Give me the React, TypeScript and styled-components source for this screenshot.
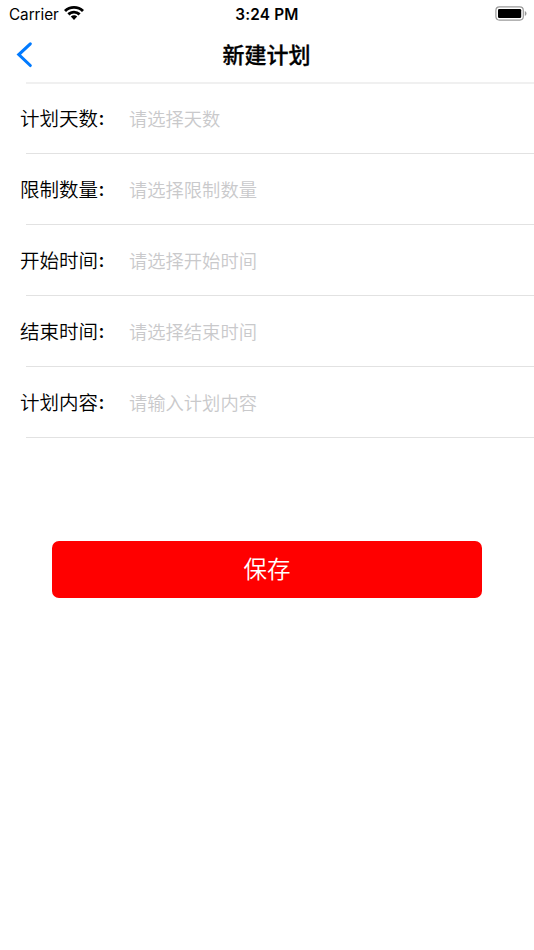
import React from "react";
import styled, { createGlobalStyle } from "styled-components";

const GlobalStyle = createGlobalStyle`
  * { box-sizing: border-box; }
  body { margin: 0; background: #fff; color: #000; font-family: Inter, "Noto Sans CJK SC", sans-serif; }
`;
const Screen = styled.main`width: 534px; height: 950px; background: #fff; overflow: hidden;`;
const StatusBar = styled.header`
  height: 28px; display: grid; grid-template-columns: 1fr auto 1fr; align-items: center; padding: 0 7px 0 9px;
`;
const Carrier = styled.div`
  display: flex; align-items: center; gap: 5px; font-size: 15.3px; letter-spacing: -0.05px; line-height: 20px; padding-top: 1px;
  svg { margin-top: -3px; }
`;
const Clock = styled.time`
  font-size: 15.3px; font-weight: 600; letter-spacing: 0.2px; line-height: 20px; margin-right: 2px; padding-top: 1px;
`;
const Battery = styled.div`justify-self: end; display: flex; margin-top: -2px;`;
const NavBar = styled.nav`
  height: 54px; display: grid; grid-template-columns: 48px 1fr 48px; align-items: center;
`;
const BackButton = styled.button`
  border: 0; background: none; padding: 0 0 0 16px; display: flex;
`;
const Title = styled.h1`
  margin: 0 1px 0 0; text-align: center; font-size: 22px; line-height: 32px; font-weight: 500;
  -webkit-text-stroke: 0.3px #000;
`;
const Form = styled.form`display: block;`;
const Rows = styled.div`margin-left: 26px; border-top: 2px solid #f0f0f0;`;
const Row = styled.label`
  height: 71px; display: flex; align-items: center; padding-top: 1px; border-bottom: 1px solid #e2e2e2;
  &:first-child { height: 70px; padding-top: 0; }
`;
const Label = styled.span`
  width: 110px; margin-left: -6px; padding-top: 1px; font-size: 19.5px; line-height: 30px; white-space: nowrap; font-weight: 350;
`;
const Colon = styled.span`position: relative; top: -1px; left: 0.5px; font-weight: 500;`;
const Placeholder = styled.span`
  margin-left: -1px; color: #c9c9cb; font-size: 18.3px; line-height: 28px; font-weight: 350;
`;
const SaveButton = styled.button`
  display: flex; align-items: center; justify-content: center; width: 430px; height: 57px; margin: 103px auto 0 52px;
  padding: 0 0 3px; border: 0; border-radius: 7px; background: #f00; color: #fff;
  font: 350 23.5px "Noto Sans CJK SC", sans-serif;
`;

const fields = [
  ["计划天数", "请选择天数"],
  ["限制数量", "请选择限制数量"],
  ["开始时间", "请选择开始时间"],
  ["结束时间", "请选择结束时间"],
  ["计划内容", "请输入计划内容"],
];

export default function App() {
  return (
    <Screen>
      <GlobalStyle />
      <StatusBar>
        <Carrier>
          Carrier
          <svg width="20" height="14" viewBox="0 0 20 14">
            <path d="M10 0C6.200 0 2.700 1.500 0 4l2 2.100a11.500 11.500 0 0 1 16 0L20 4C17.300 1.500 13.800 0 10 0Z" />
            <path d="M10 4.700c-2.500 0-4.800 1-6.600 2.600l2 2.100a6.700 6.700 0 0 1 9.200 0l2-2.100A9.700 9.700 0 0 0 10 4.700Z" />
            <path d="M10 9.200c-1.200 0-2.300.5-3.200 1.300L10 14l3.200-3.500c-.9-.8-2-1.300-3.200-1.300Z" />
          </svg>
        </Carrier>
        <Clock>3:24 PM</Clock>
        <Battery>
          <svg width="32" height="15" viewBox="0 0 32 15">
            <rect x=".9" y=".9" width="27.400" height="13.200" rx="3.500" fill="none" stroke="#9a9a9a" strokeWidth="1.200" />
            <rect x="3" y="3" width="23.200" height="9" rx="1.300" />
            <path d="M29.800 5v5c1-.4 1.700-1.400 1.700-2.500S30.800 5.400 29.800 5Z" fill="#999" />
          </svg>
        </Battery>
      </StatusBar>
      <NavBar>
        <BackButton aria-label="返回">
          <svg width="18" height="28" viewBox="0 0 18 28" fill="none" stroke="#007aff" strokeWidth="3.100" strokeLinecap="round">
            <path d="M14.300 2.800 2.800 13.500l11.500 11" />
          </svg>
        </BackButton>
        <Title>新建计划</Title>
      </NavBar>
      <Form>
        <Rows>
          {fields.map(([label, hint]) => (
            <Row key={label}><Label>{label}<Colon>:</Colon></Label><Placeholder>{hint}</Placeholder></Row>
          ))}
        </Rows>
        <SaveButton type="button">保存</SaveButton>
      </Form>
    </Screen>
  );
}
